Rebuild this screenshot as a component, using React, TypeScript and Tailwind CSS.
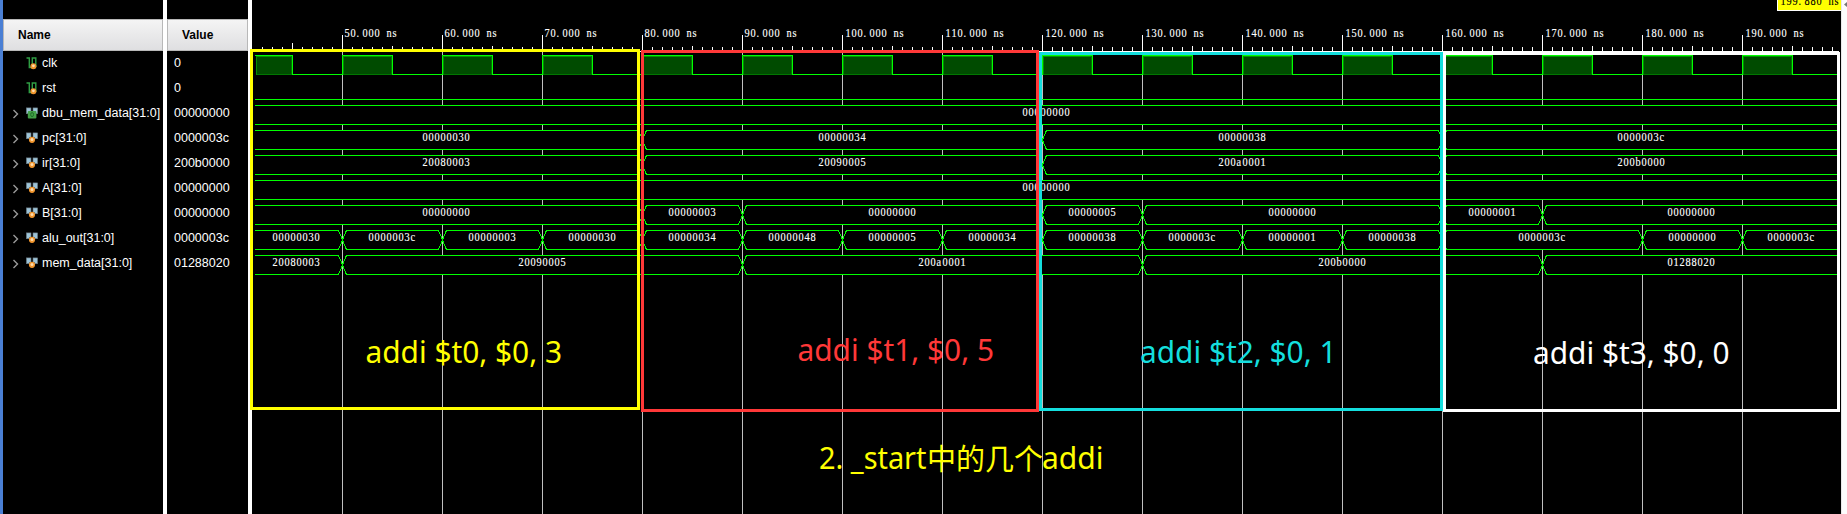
import React from "react";

type Segment = { from: number; to: number; value: string };
type Kind = "bit" | "reg" | "bus";
type Signal = { name: string; value: string; kind: Kind };

const SIGNALS: Signal[] = [
  { name: "clk", value: "0", kind: "bit" },
  { name: "rst", value: "0", kind: "bit" },
  { name: "dbu_mem_data[31:0]", value: "00000000", kind: "reg" },
  { name: "pc[31:0]", value: "0000003c", kind: "bus" },
  { name: "ir[31:0]", value: "200b0000", kind: "bus" },
  { name: "A[31:0]", value: "00000000", kind: "bus" },
  { name: "B[31:0]", value: "00000000", kind: "bus" },
  { name: "alu_out[31:0]", value: "0000003c", kind: "bus" },
  { name: "mem_data[31:0]", value: "01288020", kind: "bus" },
];

const VIEW_LEFT = 251;
const VIEW_RIGHT = 1841;
// 10 px per nanosecond
const at = (ns: number) => Math.min(VIEW_RIGHT, Math.max(VIEW_LEFT, ns * 10 - 158));
const seg = (from: number, to: number, value: string): Segment => ({ from, to, value });

const BUSES: { top: number; segments: Segment[] }[] = [
  { top: 105, segments: [seg(0, 250, "00000000")] },
  {
    top: 130,
    segments: [seg(0, 80, "00000030"), seg(80, 120, "00000034"), seg(120, 160, "00000038"), seg(160, 250, "0000003c")],
  },
  {
    top: 155,
    segments: [seg(0, 80, "20080003"), seg(80, 120, "20090005"), seg(120, 160, "200a0001"), seg(160, 250, "200b0000")],
  },
  { top: 180, segments: [seg(0, 250, "00000000")] },
  {
    top: 205,
    segments: [
      seg(0, 80, "00000000"),
      seg(80, 90, "00000003"),
      seg(90, 120, "00000000"),
      seg(120, 130, "00000005"),
      seg(130, 160, "00000000"),
      seg(160, 170, "00000001"),
      seg(170, 250, "00000000"),
    ],
  },
  {
    top: 230,
    segments: [
      seg(0, 50, "00000030"),
      seg(50, 60, "0000003c"),
      seg(60, 70, "00000003"),
      seg(70, 80, "00000030"),
      seg(80, 90, "00000034"),
      seg(90, 100, "00000048"),
      seg(100, 110, "00000005"),
      seg(110, 120, "00000034"),
      seg(120, 130, "00000038"),
      seg(130, 140, "0000003c"),
      seg(140, 150, "00000001"),
      seg(150, 160, "00000038"),
      seg(160, 180, "0000003c"),
      seg(180, 190, "00000000"),
      seg(190, 250, "0000003c"),
    ],
  },
  {
    top: 255,
    segments: [
      seg(0, 50, "20080003"),
      seg(50, 90, "20090005"),
      seg(90, 130, "200a0001"),
      seg(130, 170, "200b0000"),
      seg(170, 250, "01288020"),
    ],
  },
];

const MAJORS = Array.from({ length: 15 }, (_, i) => 50 + i * 10);
const MINORS = Array.from({ length: 158 }, (_, i) => 42 + i).filter((t) => t % 10 !== 0 && t < 200);

// Fixed 6 px pitch with slightly condensed glyphs
const CONDENSE = 0.86;

function MonoText({ x, y, text, fill = "#ffffff" }: { x: number; y: number; text: string; fill?: string }) {
  const xs = text.split("").map((_, i) => ((x + 0.5 + i * 6) / CONDENSE).toFixed(2)).join(" ");
  return (
    <text
      x={xs}
      y={y}
      transform={`scale(${CONDENSE} 1)`}
      fill={fill}
      stroke={fill}
      strokeWidth="0.15"
      className="whitespace-pre font-['Liberation_Serif',serif] text-[12px]"
    >
      {text}
    </text>
  );
}

function BusSegment({ top, segment }: { top: number; segment: Segment }) {
  const x1 = at(segment.from);
  const x2 = at(segment.to);
  const bottom = top + 19;
  const t = top + 0.5;
  const m = top + 10;
  const b = bottom + 0.5;
  const openLeft = x1 === VIEW_LEFT;
  const openRight = x2 === VIEW_RIGHT;
  const l = x1 + 0.5;
  const r = x2 + 0.5;
  const upper = `${openLeft ? "" : `${l},${m} ${l + 1},${m - 3} `}${openLeft ? l : l + 4},${t} ${openRight ? r : r - 4},${t}${openRight ? "" : ` ${r - 1},${m - 3} ${r},${m}`}`;
  const lower = `${openLeft ? "" : `${l},${m} ${l + 1},${m + 3} `}${openLeft ? l : l + 4},${b} ${openRight ? r : r - 4},${b}${openRight ? "" : ` ${r - 1},${m + 3} ${r},${m}`}`;
  const lowerBack = lower.split(" ").reverse().join(" ");
  return (
    <g>
      <polygon points={`${upper} ${lowerBack}`} fill="#000000" />
      <polyline points={upper} fill="none" stroke="#00ff00" shapeRendering="crispEdges" />
      <polyline points={lower} fill="none" stroke="#00ff00" shapeRendering="crispEdges" />
      <MonoText x={Math.floor((x1 + x2) / 2) - 24} y={top + 11} text={segment.value} />
    </g>
  );
}

function ClockWave() {
  const pulses = [40, ...MAJORS.filter((t) => t < 200)];
  return (
    <g shapeRendering="crispEdges">
      {pulses.map((t) => {
        const x = t === 40 ? 256 : at(t);
        const end = at(t + 5);
        return (
          <g key={t}>
            <rect x={x} y={55} width={end - x} height={20} fill="#004b00" />
            <rect x={x} y={56} width={end - x} height={1} fill="#009600" />
            <rect x={x} y={74} width={end - x} height={1} fill="#007800" />
            <rect x={x + (t === 40 ? 0 : 1)} y={56} width={1} height={19} fill="#008c00" />
            <rect x={end - 1} y={56} width={1} height={19} fill="#007800" />
            <rect x={t === 40 ? 255 : x} y={55} width={end - x + 1} height={1} fill="#00ff00" />
            {t !== 40 && <rect x={x} y={55} width={1} height={20} fill="#00ff00" />}
            <rect x={end} y={55} width={1} height={20} fill="#00ff00" />
            <rect x={end} y={74} width={at(t + 10) - end} height={1} fill="#00ff00" />
          </g>
        );
      })}
    </g>
  );
}

function Frame({ x1, y1, x2, y2, color }: { x1: number; y1: number; x2: number; y2: number; color: string }) {
  return (
    <rect x={x1 + 1.5} y={y1 + 1.5} width={x2 - x1 - 3} height={y2 - y1 - 3} fill="none" stroke={color} strokeWidth="3" shapeRendering="crispEdges" />
  );
}

function Note({ x, y, width, color, text }: { x: number; y: number; width: number; color: string; text: string }) {
  return (
    <text x={x} y={y} fill={color} textLength={width} lengthAdjust="spacingAndGlyphs" className="font-['Noto_Sans',sans-serif] text-[31px]">
      {text}
    </text>
  );
}

function Waveform() {
  return (
    <svg width="1589" height="514" viewBox="252 0 1589 514" className="block shrink-0 overflow-visible bg-black">
      <g shapeRendering="crispEdges">
        {MAJORS.map((t) => (
          <rect key={t} x={at(t)} y={52} width={1} height={462} fill="#c0c0c0" />
        ))}
        <rect x={255} y={51} width={1584} height={1} fill="#ffffff" />
        {MAJORS.map((t) => (
          <rect key={t} x={at(t)} y={35} width={1} height={16} fill="#ffffff" />
        ))}
        {MINORS.map((t) => {
          const y = t === 45 ? 43 : t % 5 === 0 ? 46 : 47;
          return <rect key={t} x={at(t)} y={y} width={1} height={51 - y} fill="#ffffff" />;
        })}
      </g>
      {MAJORS.map((t) => (
        <MonoText key={t} x={at(t) + (t < 100 ? 2 : 3)} y={37} text={`${t}.000 ns`} />
      ))}

      <ClockWave />
      <rect x={255} y={99} width={1584} height={1} fill="#00ff00" />
      {BUSES.map((bus) => (
        <g key={bus.top}>
          {bus.segments.map((s) => (
            <BusSegment key={s.from} top={bus.top} segment={s} />
          ))}
        </g>
      ))}
      <rect x={252} y={53} width={3} height={354} fill="#000000" />
      <rect x={1840} y={52} width={1} height={360} fill="#000000" />

      <rect x={1777} y={0} width={64} height={11} fill="#ffffff" />
      <rect x={1778} y={0} width={63} height={10} fill="#ffff00" />
      <MonoText x={1780} y={5} text="199.880 ns" fill="#000000" />

      <Frame x1={250} y1={49} x2={640} y2={410} color="#ffff00" />
      <Frame x1={641} y1={50} x2={1039} y2={412} color="#ff3838" />
      <Frame x1={1039} y1={52} x2={1443} y2={411} color="#14dede" />
      <Frame x1={1443} y1={52} x2={1840} y2={412} color="#ffffff" />

      <Note x={365.5} y={363} width={196.5} color="#ffff00" text="addi $t0, $0, 3" />
      <Note x={797.5} y={360.5} width={196.5} color="#ff3838" text="addi $t1, $0, 5" />
      <Note x={1140} y={363} width={196.5} color="#14dede" text="addi $t2, $0, 1" />
      <Note x={1533} y={364} width={196.5} color="#ffffff" text="addi $t3, $0, 0" />

      <Note x={819} y={469} width={107.5} color="#ffff00" text="2. _start" />
      <text x={927} y={469.5} fill="#ffff00" className="font-['Noto_Sans_CJK_SC',sans-serif] text-[29px]">
        中的几个
      </text>
      <Note x={1042} y={469} width={61.5} color="#ffff00" text="addi" />
    </svg>
  );
}

function SignalIcon({ kind }: { kind: Kind }) {
  if (kind === "bit") {
    return (
      <svg width="12" height="13" viewBox="0 0 12 13" className="block">
        <path d="M0.5 1H3.3V10.5H6.3V1H9.8V10" fill="none" stroke="#2f9e44" strokeWidth="1.4" />
        <circle cx="7.4" cy="9.2" r="3" fill="#f0952d" />
        <circle cx="7.4" cy="8.8" r="1.4" fill="#ffdcae" />
      </svg>
    );
  }
  return (
    <svg width="12" height="13" viewBox="0 0 12 13" className="block">
      <rect x="0.4" y="0.9" width="4.6" height="5.8" fill="#9cc3d8" stroke="#68767e" strokeWidth="0.6" />
      <rect x="7" y="0.9" width="4.6" height="5.8" fill="#9cc3d8" stroke="#68767e" strokeWidth="0.6" />
      <path d="M3 5H9V8H3Z" fill="#68767e" />
      {kind === "reg" ? (
        <g>
          <rect x="1.8" y="4" width="8.6" height="7.4" rx="1" fill="#43a047" />
          <ellipse cx="6.1" cy="7.6" rx="1.4" ry="2.1" fill="none" stroke="#1f6b2b" strokeWidth="1" />
        </g>
      ) : (
        <g>
          <circle cx="6" cy="7.8" r="3.1" fill="#f0952d" />
          <circle cx="6" cy="7.6" r="1.5" fill="#ffdcae" />
        </g>
      )}
    </svg>
  );
}

const HEADER =
  "flex h-8 items-center border border-[#b8b8b8] bg-linear-to-b from-[#f4f4f4] to-[#dfdfe1] text-[12px] font-bold text-black";

export default function App() {
  return (
    <div className="flex h-[514px] w-[1847px] overflow-hidden bg-black font-['Liberation_Sans',Arial,sans-serif] text-[12.5px] text-white">
      <div className="w-[3px] shrink-0 bg-[#4a7fd4]" />
      <div className="w-40 shrink-0 pt-[19px]">
        <div className={`${HEADER} pl-[14px]`}>Name</div>
        {SIGNALS.map((s) => (
          <div key={s.name} className="flex h-[25px] items-center pl-[9px]">
            <div className="w-[14px]">
              {s.kind !== "bit" && (
                <svg width="8" height="10" viewBox="0 0 8 10" className="block">
                  <path d="M1.5 1L5.5 5L1.5 9" fill="none" stroke="#9a9a9a" strokeWidth="1.4" />
                </svg>
              )}
            </div>
            <SignalIcon kind={s.kind} />
            <span className="ml-1 whitespace-nowrap leading-[15px]">{s.name}</span>
          </div>
        ))}
      </div>
      <div className="w-1 shrink-0 bg-white" />
      <div className="w-[81px] shrink-0 pt-[19px]">
        <div className={`${HEADER} pl-[14px]`}>Value</div>
        {SIGNALS.map((s) => (
          <div key={s.name} className="flex h-[25px] items-center pl-[7px] leading-[15px]">
            {s.value}
          </div>
        ))}
      </div>
      <div className="w-1 shrink-0 bg-white" />
      <Waveform />
      <div className="w-[6px] shrink-0 border-l border-[#e8e8e8] bg-[#fcfcfc]">
        <svg width="5" height="10" viewBox="0 0 5 10" className="block">
          <path d="M5 2L2 4.5L5 7Z" fill="#777777" />
        </svg>
      </div>
    </div>
  );
}
